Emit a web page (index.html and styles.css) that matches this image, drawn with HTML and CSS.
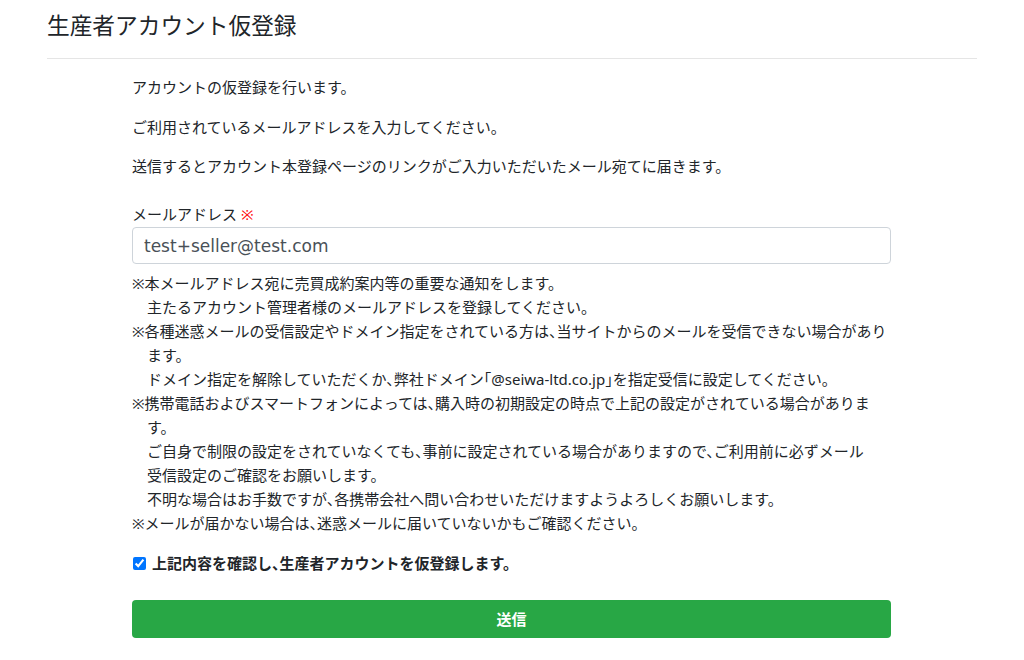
FILE: index.html
```html
<!DOCTYPE html>
<html lang="ja">
<head>
    <meta charset="utf-8">
    <title>生産者アカウント仮登録</title>
    <link rel="stylesheet" href="styles.css">
</head>
<body>
    <div class="container">
        <header>
            <h1>生産者アカウント仮登録</h1>
        </header>

        <form class="entry-form" onsubmit="return false;">
            <p>アカウントの仮登録を行います。</p>
            <p>ご利用されているメールアドレスを入力してください。</p>
            <p>送信するとアカウント本登録ページのリンクがご入力いただいたメール宛てに届きます。</p>

            <div class="form-group">
                <label for="email">メールアドレス <span class="required">※</span></label>
                <input type="email" id="email" class="form-control" value="test+seller@test.com">
                <ul class="notes">
                    <li>※本メールアドレス宛に売買成約案内等の重要な通知をします。<br>主たるアカウント管理者様のメールアドレスを登録してください。</li>
                    <li>※各種迷惑メールの受信設定やドメイン指定をされている方は、当サイトからのメールを受信できない場合があり<br>ます。<br>ドメイン指定を解除していただくか、弊社ドメイン「@seiwa-ltd.co.jp」を指定受信に設定してください。</li>
                    <li>※携帯電話およびスマートフォンによっては、購入時の初期設定の時点で上記の設定がされている場合がありま<br>す。<br>ご自身で制限の設定をされていなくても、事前に設定されている場合がありますので、ご利用前に必ずメール<br>受信設定のご確認をお願いします。<br>不明な場合はお手数ですが、各携帯会社へ問い合わせいただけますようよろしくお願いします。</li>
                    <li>※メールが届かない場合は、迷惑メールに届いていないかもご確認ください。</li>
                </ul>
            </div>

            <div class="check-group">
                <input type="checkbox" id="agree" checked>
                <label for="agree">上記内容を確認し、生産者アカウントを仮登録します。</label>
            </div>

            <button type="submit" class="btn-submit">送信</button>
        </form>
    </div>
</body>
</html>
```

FILE: styles.css
```css
body {
    margin: 0;
    font-family: 'Noto Sans', 'Noto Sans CJK JP', sans-serif;
    font-size: 15px;
    line-height: 1.5;
    color: #212529;
    background: #fff;
    font-feature-settings: "halt";
}
.container {
    padding: 0 47px;
}
header {
    padding-top: 12px;
    padding-bottom: 19px;
    border-bottom: 1px solid #e5e5e5;
}
h1 {
    margin: 0;
    font-size: 22.7px;
    font-weight: 400;
    line-height: 1.2;
}
.entry-form {
    width: 759px;
    margin: 17px 0 0 85px;
}
p {
    margin: 0 0 17px;
}
.form-group {
    margin-top: 25px;
}
.form-group label {
    display: block;
    margin-bottom: 2px;
}
.required {
    color: #f00;
}
.form-control {
    display: block;
    box-sizing: border-box;
    width: 100%;
    height: 37px;
    padding: 4px 11px;
    font-family: 'DejaVu Sans', 'Noto Sans CJK JP', sans-serif;
    font-size: 17px;
    color: #495057;
    border: 1px solid #ced4da;
    border-radius: 4px;
    background: #fff;
}
.notes {
    list-style: none;
    margin: 7px 0 0;
    padding: 0 0 0 15px;
    line-height: 24px;
    white-space: nowrap;
}
.notes li {
    text-indent: -15px;
}
.check-group {
    display: flex;
    align-items: center;
    margin-top: 17px;
}
.check-group input {
    width: 13px;
    height: 13px;
    margin: 0 6px 0 1px;
}
.check-group label {
    font-weight: bold;
}
.btn-submit {
    display: block;
    width: 100%;
    height: 38px;
    margin-top: 25px;
    border: none;
    border-radius: 4px;
    background: #28a745;
    color: #fff;
    font-family: inherit;
    font-size: 15px;
    font-weight: bold;
    cursor: pointer;
}
```
